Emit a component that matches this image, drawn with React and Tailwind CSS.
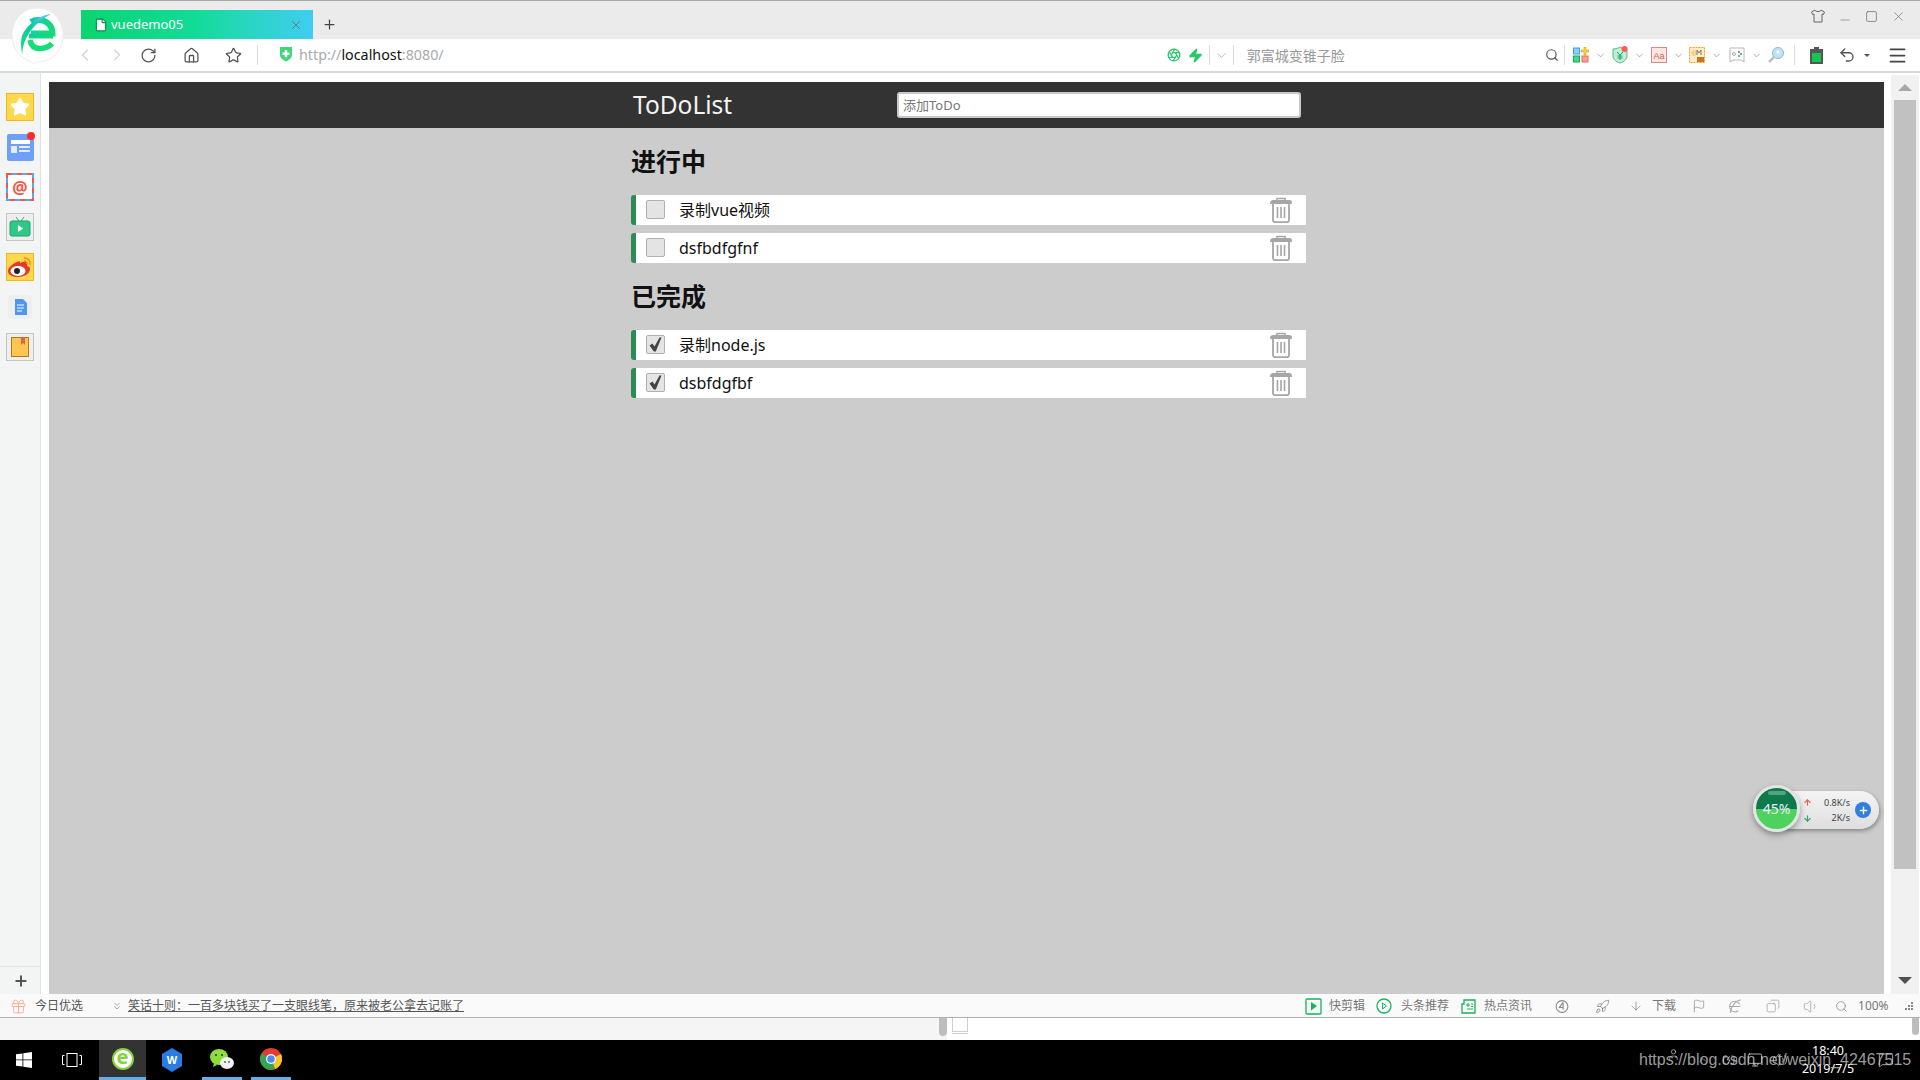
import {
  ArrowDown, Aperture, ChevronDown, ChevronLeft, ChevronRight, ChevronUp, ChevronsDown, Copy, File, Flag, Gift, House,
  Menu, Minus, Plus, RotateCw, Rocket, Search, Square, Star, Undo2, User, Volume1, Volume2, X, Zap, Monitor, MessageSquare, BatteryCharging,
} from "lucide-react";

const todos = ["录制vue视频", "dsfbdfgfnf"];
const dones = ["录制node.js", "dsbfdgfbf"];

function Logo() {
  return (
    <svg className="absolute left-[8px] top-[4px]" width="60" height="66" viewBox="8 4 60 66">
      <defs>
        <linearGradient id="eg" x1="0" y1="0" x2="1" y2="1">
          <stop offset="0" stopColor="#12c9a8" />
          <stop offset="1" stopColor="#13e06e" />
        </linearGradient>
        <linearGradient id="sw" x1="1" y1="0" x2="0" y2="1">
          <stop offset="0" stopColor="#55c8f0" />
          <stop offset="0.5" stopColor="#10c9a0" />
          <stop offset="1" stopColor="#18df78" />
        </linearGradient>
      </defs>
      <path d="M37.5 8c14.5 0 25.5 11.500 25.500 27 0 15-11 27-25.500 27l-4 2-3-2.800C19.500 58.500 12 48 12 35 12 20 23 8 37.500 8z" fill="#fff" stroke="#ececec" />
      <path d="M31 33.500h21.500c0-8-6-13.500-14-13.500-3 0-5.500.7-7.500 2" fill="none" stroke="url(#eg)" strokeWidth="6" />
      <path d="M29 33.500h24v5H29z" fill="url(#eg)" />
      <path d="M30 40c1 6 5 8.500 10 8.500 5 0 9-1.500 12-5" fill="none" stroke="#14de74" strokeWidth="5.500" />
      <path d="M51 14c-13 2-27 13-29.500 24-1 5-.5 11 1 17-.3-8 2-14 6-21 5-8 13-15 22.500-20z" fill="url(#sw)" />
      <path d="M51 14c-6 .6-13 4-18 8l4-1.500c5-2.500 9-5 14-6.500z" fill="#55c8f0" />
    </svg>
  );
}

function TabStrip() {
  return (
    <div className="h-[39px] shrink-0 bg-[#ebebeb] border-t border-[#a8a8a8] flex items-end pl-[81px]">
      <div className="h-[29px] w-[232px] bg-gradient-to-r from-[#0bd56e] via-[#12db98] to-[#3fcdf0] flex items-center pl-[13px]">
        <File size={14} className="text-[#0a8a50] fill-white" />
        <span className="ml-[3px] text-[13px] text-white">vuedemo05</span>
        <X size={14} strokeWidth={1.3} className="ml-auto mr-[10px] text-[#5f6d6b]" />
      </div>
      <Plus size={15} strokeWidth={2} className="ml-[9px] mb-[7px] text-[#444]" />
      <div className="ml-auto self-start flex items-center h-[30px] pr-[14px] text-[#666]">
        <svg width="16" height="14" viewBox="0 0 16 14" fill="none" stroke="#666">
          <path d="M5 1 1.500 3l1 2.500L4 5v8h8V5l1.500.5 1-2.500L11 1c-.5 2-5.500 2-6 0z" />
        </svg>
        <Minus size={14} strokeWidth={1} className="ml-[12px] mt-[8px]" />
        <Square size={13} strokeWidth={1.300} className="ml-[13px]" />
        <X size={15} strokeWidth={1} className="ml-[13px]" />
      </div>
    </div>
  );
}

function Caret() {
  return <ChevronDown size={11} strokeWidth={1.300} className="text-[#777] ml-[6px]" />;
}

function Toolbar() {
  return (
    <div className="h-[34px] shrink-0 bg-white border-b-2 border-[#d8d8d8] flex items-center pl-[75px] text-[14px]">
      <ChevronLeft size={20} strokeWidth={1.500} className="text-[#d4d4d4]" />
      <ChevronRight size={20} strokeWidth={1.500} className="ml-[12px] text-[#d4d4d4]" />
      <RotateCw size={17} strokeWidth={1.800} className="ml-[13px] text-[#555]" />
      <House size={17} strokeWidth={1.800} className="ml-[26px] text-[#555]" />
      <Star size={17} strokeWidth={1.800} className="ml-[25px] text-[#555]" />
      <div className="ml-[15px] w-px h-[20px] bg-[#ddd]" />
      <svg className="ml-[21px] mb-[3px]" width="14" height="16" viewBox="0 0 14 16">
        <path d="M1 1h12v8c0 3-3 5-6 6.500C4 14 1 12 1 9z" fill="#3fd77a" />
        <path d="M5.800 4h2.400v2.500h2.300v2.400H8.200v2.400H5.800V8.900H3.500V6.500h2.300z" fill="#fff" />
      </svg>
      <span className="ml-[6px] text-[14.300px] text-[#aaa]">http://<span className="text-[#111]">localhost</span>:8080/</span>

      <div className="ml-[723px] flex items-center">
        <Aperture size={14} strokeWidth={2.200} className="text-[#2bc76a]" />
        <Zap size={15} className="ml-[7px] text-[#25c96b] fill-[#25c96b]" />
        <div className="ml-[6px] w-px h-[20px] bg-[#ddd]" />
        <ChevronDown size={15} strokeWidth={1} className="ml-[4px] text-[#999]" />
        <div className="ml-[4px] w-px h-[20px] bg-[#ddd]" />
        <span className="ml-[13px] w-[309px] text-[14px] text-[#999]">郭富城变锥子脸</span>
        <Search size={14} strokeWidth={2} className="ml-[-11px] text-[#555]" />
        <div className="ml-[5px] w-px h-[20px] bg-[#ddd]" />
        <svg className="ml-[8px]" width="16" height="16" viewBox="0 0 16 16">
          <rect x="0.500" y="1" width="6" height="6" fill="#8fd0fb" stroke="#3aa0e8" />
          <rect x="0.500" y="9" width="6" height="6" fill="#3fdc85" stroke="#16a85a" />
          <rect x="9" y="9" width="6" height="6" fill="#ffa090" stroke="#e06a5a" />
          <path d="M11 0h2v3h3v2h-3v3h-2V5H8V3h3z" fill="#ffd23c" stroke="#c69600" strokeWidth="0.500" />
        </svg>
        <Caret />
        <svg className="ml-[6px]" width="16" height="18" viewBox="0 0 16 18">
          <path d="M1 3c3 0 5-1 7-2 2 1 4 2 7 2v7c0 3-3 6-7 7-4-1-7-4-7-7z" fill="#bdeed6" stroke="#55b98a" />
          <path d="M5 6l3 3 3-3M8 9v5M5.500 10h5M5.500 12h5" stroke="#2f9a68" fill="none" />
          <circle cx="12.500" cy="3" r="3" fill="#ff5a5a" />
        </svg>
        <Caret />
        <svg className="ml-[6px]" width="16" height="16" viewBox="0 0 16 16">
          <rect x="0.500" y="0.500" width="15" height="15" fill="#fbe6e2" stroke="#d88a80" />
          <text x="8" y="11.500" textAnchor="middle" fontSize="9" fill="#c8605a" fontFamily="Liberation Sans">Aa</text>
        </svg>
        <Caret />
        <svg className="ml-[5px]" width="16" height="16" viewBox="0 0 16 16">
          <rect x="0.500" y="0.500" width="15" height="15" fill="#fdeccc" stroke="#f0a020" strokeDasharray="2 1" />
          <circle cx="5" cy="6" r="3" fill="#f8d28c" />
          <rect x="8" y="10" width="7" height="5" fill="#c8781a" />
          <path d="M8 8V3l2 3 2-3v5" stroke="#8a7a60" fill="none" />
        </svg>
        <Caret />
        <svg className="ml-[7px]" width="16" height="16" viewBox="0 0 16 16" fill="none">
          <path d="M1 1h14v14l-3-2H4l-3 2z" stroke="#b8b8b8" />
          <circle cx="5" cy="7" r="1.500" stroke="#aaa" />
          <rect x="9" y="4" width="2" height="2" fill="#e86a5a" />
          <rect x="11" y="6" width="2" height="2" fill="#45b6e8" />
          <rect x="9" y="8" width="2" height="2" fill="#3fd07a" />
        </svg>
        <Caret />
        <svg className="ml-[6px]" width="16" height="16" viewBox="0 0 16 16">
          <circle cx="10" cy="6" r="5.500" fill="#bfe2f5" stroke="#8ab6d0" />
          <circle cx="10" cy="5" r="1.500" fill="#fff" />
          <path d="M6 10l-5 5" stroke="#c0c0c0" strokeWidth="2.500" />
        </svg>
        <div className="ml-[10px] w-px h-[20px] bg-[#ddd]" />
        <svg className="ml-[15px]" width="13" height="17" viewBox="0 0 13 17">
          <path d="M4 0h5v2h4v15H0V2h4z" fill="#555" />
          <rect x="2" y="6" width="9" height="9" fill="#12c850" />
        </svg>
        <Undo2 size={18} strokeWidth={1.800} className="ml-[15px] text-[#555]" />
        <div className="ml-[8px] mt-[1px] border-x-[3px] border-t-[3px] border-x-transparent border-t-[#555]" />
        <Menu size={21} strokeWidth={2} className="ml-[17px] text-[#444]" />
      </div>
    </div>
  );
}

function SideIcon({ children, border = "border-[#c4c4c4]", bg = "bg-[#eee]" }) {
  return <div className={`w-[28px] h-[28px] border ${border} ${bg} flex items-center justify-center`}>{children}</div>;
}

function Sidebar() {
  return (
    <div className="w-[41px] shrink-0 bg-[#f3f4f4] border-r border-[#e2e2e2] flex flex-col items-center pt-[20px] gap-[12px]">
      <SideIcon border="border-[#f3b61f]" bg="bg-[#ffd84d]">
        <Star size={20} className="text-white fill-white" />
      </SideIcon>
      <div className="relative w-[27px] h-[27px] mt-[1px] rounded-[2px] bg-[#6ea0fb] flex flex-col gap-[2px] px-[4px] pt-[6px]">
        <div className="h-[4px] bg-white" />
        <div className="flex gap-[2px]">
          <div className="w-[6px] h-[7px] bg-white/80" />
          <div className="flex-1 flex flex-col gap-[2px]">
            <div className="h-[2px] bg-white/80" />
            <div className="h-[2px] bg-white/80" />
          </div>
        </div>
        <div className="absolute -right-[1px] -top-[2px] w-[8px] h-[8px] rounded-full bg-[#ff2a2a]" />
      </div>
      <div className="relative w-[28px] h-[28px] bg-white flex items-center justify-center text-[#ee5a4a] text-[17px] leading-none font-bold">
        <svg className="absolute inset-0" width="28" height="28" viewBox="0 0 28 28" fill="none" strokeWidth="2">
          <rect x="1" y="1" width="26" height="26" stroke="#58a8f0" />
          <rect x="1" y="1" width="26" height="26" stroke="#ef5a4a" strokeDasharray="5 5" />
        </svg>
        <span className="relative">@</span>
      </div>
      <SideIcon>
        <svg width="22" height="20" viewBox="0 0 22 20">
          <path d="M7 0l3 4M15 0l-3 4" stroke="#2bb673" />
          <rect x="1" y="4" width="20" height="15" rx="2" fill="#2fc987" stroke="#20a068" />
          <path d="M9 8l5 3.500-5 3.500z" fill="#fff" />
        </svg>
      </SideIcon>
      <SideIcon border="border-[#f3b61f]" bg="bg-[#ffd84d]">
        <svg width="26" height="22" viewBox="0 0 26 22">
          <path d="M10 6C5 8 1 12 1 15c0 4 5 6 10 6 7 0 12-4 12-8 0-2-2-3-3-3 1-3-1-5-4-4-2 .5-3 1-3 1s1-3-3-1z" fill="#e8352e" />
          <ellipse cx="11" cy="15" rx="7.500" ry="5" fill="#fff" />
          <circle cx="10" cy="15" r="3" fill="#222" />
          <path d="M17 2c4 0 7 3 6 7M17 5c2 0 3 1.500 3 3" stroke="#f08a1e" strokeWidth="1.500" fill="none" />
        </svg>
      </SideIcon>
      <div className="w-[24px] h-[24px] mt-[2px] rounded-[4px] bg-[#eeeeee] flex items-center justify-center">
        <svg width="13" height="16" viewBox="0 0 13 16">
          <path d="M1 0h8l4 4v12H1z" fill="#4f96ee" />
          <path d="M3 6h7M3 9h7M3 12h5" stroke="#fff" />
        </svg>
      </div>
      <div className="mt-[2px]">
        <SideIcon>
          <svg width="18" height="20" viewBox="0 0 18 20">
            <rect x="0.500" y="0.500" width="17" height="19" fill="#fdc650" stroke="#b87a18" />
            <path d="M10 1h4v7l-2-2-2 2z" fill="#e8604a" />
          </svg>
        </SideIcon>
      </div>
      <div className="mt-auto w-full h-[28px] border-t border-[#e2e2e2] flex items-center justify-center pl-[2px]">
        <Plus size={16} strokeWidth={3} className="text-[#555]" />
      </div>
    </div>
  );
}

function Trash() {
  return (
    <svg width="22" height="26" viewBox="0 0 22 26" fill="none" stroke="#a6a6a6" strokeWidth="1.500">
      <path d="M7 4V1.500h8V4" />
      <path d="M1 5.500c0-1 1-1.500 2-1.500h16c1 0 2 .5 2 1.500V6H1z" strokeWidth="1.800" />
      <path d="M3 6v17c0 1.500 1 2.200 2 2.200h12c1 0 2-.7 2-2.200V6" strokeWidth="1.800" />
      <path d="M7.500 10v11M11 10v11M14.500 10v11" strokeWidth="1.600" />
    </svg>
  );
}

function Row({ label, done }) {
  return (
    <li className="h-[30px] w-[675px] flex items-center bg-white border-l-[5px] border-[#2e8b57] rounded-l-[3px] text-[16px] leading-none text-[#111]">
      <div className="ml-[10px] mb-[1px] w-[19px] h-[19px] rounded-[2px] border border-[#b0b0b0] bg-[#e4e4e4] flex items-center justify-center">
        {done && (
          <svg width="13" height="15" viewBox="0 0 13 15">
            <path d="M0.500 8.500 3.500 6.500 5.500 9.500 10.500 0.500H12.500L6.800 14.500H4.800z" fill="#444" />
          </svg>
        )}
      </div>
      <span className="ml-[14px]">{label}</span>
      <div className="ml-auto mr-[14px] mb-[1px] flex">
        <Trash />
      </div>
    </li>
  );
}

function Page() {
  return (
    <div className="flex-1 pt-[9px] pl-[8px] flex flex-col bg-white min-w-0">
      <div className="flex-1 bg-[#cccccc] flex flex-col">
        <div className="h-[46px] bg-[#333333] flex items-center pl-[584px]">
          <h1 className="w-[264px] text-[24.500px] leading-none text-[#f4f4f4]">ToDoList</h1>
          <input
            readOnly
            placeholder="添加ToDo"
            className="w-[404px] h-[26px] rounded-[3px] bg-white border-2 border-[#c8c8c8] px-[4px] text-[13px] placeholder:text-[#777] outline-none"
          />
        </div>
        <div className="pl-[582px]">
          <h2 className="mt-[19px] text-[25px] leading-[29px] font-bold text-[#111]">进行中</h2>
          <ul className="mt-[19px] flex flex-col gap-[8px]">
            {todos.map((t) => <Row key={t} label={t} />)}
          </ul>
          <h2 className="mt-[19px] text-[25px] leading-[29px] font-bold text-[#111]">已完成</h2>
          <ul className="mt-[19px] flex flex-col gap-[8px]">
            {dones.map((t) => <Row key={t} label={t} done />)}
          </ul>
        </div>
      </div>
    </div>
  );
}

function Scrollbar() {
  return (
    <div className="w-[36px] shrink-0 bg-white pl-[7px] pr-[1px] pt-[2px] flex">
      <div className="flex-1 bg-[#f1f1f1] flex flex-col items-center">
        <div className="h-[25px] flex items-center">
          <div className="border-x-[7px] border-b-[7px] border-x-transparent border-b-[#a8a8a8]" />
        </div>
        <div className="w-[22px] h-[769px] bg-[#c1c1c1]" />
        <div className="flex-1 flex items-end pb-[10px]">
          <div className="border-x-[7px] border-t-[7px] border-x-transparent border-t-[#505050]" />
        </div>
      </div>
    </div>
  );
}

function StatusBar() {
  return (
    <div className="h-[24px] shrink-0 bg-[#fafafa] border-b border-[#b0b0b0] flex items-center pt-[1px] text-[12px] text-[#555] pl-[10px]">
      <Gift size={17} strokeWidth={1.200} className="text-[#f6a88c]" />
      <span className="ml-[8px]">今日优选</span>
      <ChevronsDown size={12} strokeWidth={1} className="ml-[28px]" />
      <span className="ml-[5px] underline w-[336px] whitespace-nowrap">笑话十则：一百多块钱买了一支眼线笔，原来被老公拿去记账了</span>

      <svg className="ml-[841px]" width="17" height="17" viewBox="0 0 17 17" fill="none">
        <rect x="1" y="1" width="15" height="15" rx="1" stroke="#15b45a" strokeWidth="1.300" />
        <path d="M6 4l6 4-6 4.500z" fill="#15b45a" />
      </svg>
      <span className="ml-[7px] w-[36px] whitespace-nowrap text-[#777]">快剪辑</span>
      <svg className="ml-[11px]" width="16" height="16" viewBox="0 0 16 16" fill="none">
        <circle cx="8" cy="8" r="7" stroke="#15b45a" strokeWidth="1.300" />
        <path d="M6.500 5l4 3-4 3z" stroke="#15b45a" />
      </svg>
      <span className="ml-[9px] w-[48px] whitespace-nowrap text-[#777]">头条推荐</span>
      <svg className="ml-[12px]" width="15" height="15" viewBox="0 0 15 15" fill="none" stroke="#15b45a" strokeWidth="1.300">
        <path d="M3 1h11v13H1V5h2z" />
        <path d="M6 5h2v2H6zM10 5h2M10 7.500h2M6 10h6" strokeWidth="1" />
      </svg>
      <span className="ml-[8px] w-[48px] whitespace-nowrap text-[#777]">热点资讯</span>
      <svg className="ml-[23px]" width="14" height="15" viewBox="0 0 13 14" fill="none" stroke="#888">
        <circle cx="6.500" cy="7" r="5.500" />
        <path d="M7.500 3 4 8h4M7.500 3v7" />
      </svg>
      <Rocket size={15} strokeWidth={1} className="ml-[26px] text-[#666]" />
      <ArrowDown size={14} strokeWidth={1} className="ml-[19px] text-[#666]" />
      <span className="ml-[9px] w-[24px] whitespace-nowrap text-[#777]">下载</span>
      <Flag size={14} strokeWidth={1} className="ml-[16px] text-[#777]" />
      <svg className="ml-[22px]" width="14" height="15" viewBox="0 0 13 14" fill="none" stroke="#aaa">
        <path d="M11 5A5 5 0 1 0 9.500 11M2 7h9.500M12 1C8 1 3 6 2 13" />
      </svg>
      <Copy size={14} strokeWidth={1} className="ml-[24px] text-[#888] -scale-x-100" />
      <Volume1 size={17} strokeWidth={1} className="ml-[23px] text-[#999]" />
      <Search size={13} strokeWidth={1.200} className="ml-[15px] text-[#777]" />
      <span className="ml-[10px] w-[32px] text-[#777]">100%</span>
      <div className="ml-[15px] grid grid-cols-3 gap-[1px] w-[8px] h-[8px]">
        <i /><i /><i className="bg-[#888]" />
        <i /><i className="bg-[#888]" /><i className="bg-[#888]" />
        <i className="bg-[#888]" /><i className="bg-[#888]" /><i className="bg-[#888]" />
      </div>
    </div>
  );
}

function LowerStrip() {
  return (
    <div className="h-[22px] shrink-0 flex bg-white">
      <div className="w-[947px] bg-[#f5f5f5] flex justify-end">
        <div className="w-[8px] h-[18px] rounded-b-[4px] bg-[#bdbdbd]" />
      </div>
      <div className="ml-[5px] w-[16px] h-[14px] border-x border-b border-[#cfcfcf] relative">
        <div className="absolute left-[-1px] right-[-1px] bottom-[-3px] h-px bg-[#cfcfcf]" />
      </div>
      <div className="ml-auto mr-[1px] w-[7px] h-[17px] rounded-b-[4px] bg-[#bdbdbd]" />
    </div>
  );
}

function Taskbar() {
  return (
    <div className="relative h-[40px] shrink-0 bg-black flex items-center text-white">
      <svg className="ml-[16px]" width="16" height="16" viewBox="0 0 16 16" fill="#fff">
        <path d="M0 2.300 6.500 1.400v6.100H0zM7.300 1.300 16 0v7.500H7.300zM0 8.300h6.500v6.300L0 13.700zM7.300 8.300H16V16l-8.700-1.300z" />
      </svg>
      <svg className="ml-[30px]" width="20" height="14" viewBox="0 0 20 14" fill="none" stroke="#fff">
        <rect x="5" y="0.500" width="10" height="13" />
        <path d="M2.500 2.500H.5v9h2M17.500 2.500h2v9h-2" />
      </svg>
      <div className="ml-[17px] w-[47px] h-full bg-[#333] border-b-[3px] border-[#66aee8] flex items-center justify-center">
        <div className="w-[22px] h-[22px] rounded-full bg-white border-2 border-[#84d23c] flex items-center justify-center text-[#84d23c] text-[20px] font-bold leading-none pb-[3px]">e</div>
      </div>
      <svg className="ml-[15px]" width="22" height="24" viewBox="0 0 22 24">
        <path d="M11 0l10 6v12l-10 6-10-6V6z" fill="#2b7be4" />
        <text x="11" y="16" textAnchor="middle" fontSize="11" fontWeight="700" fill="#fff" fontFamily="Liberation Sans">W</text>
      </svg>
      <div className="ml-[19px] w-[40px] h-full border-b-[3px] border-[#66aee8] flex items-center justify-center">
        <svg width="24" height="22" viewBox="0 0 24 22">
          <ellipse cx="9" cy="9" rx="9" ry="8" fill="#8fdc3c" />
          <path d="M4 15l-1 4 4-2z" fill="#8fdc3c" />
          <ellipse cx="17" cy="15" rx="7" ry="6" fill="#f2f2f2" />
          <circle cx="6" cy="7" r="1" fill="#333" />
          <circle cx="12" cy="7" r="1" fill="#333" />
          <circle cx="15" cy="14" r="0.900" fill="#555" />
          <circle cx="19" cy="14" r="0.900" fill="#555" />
        </svg>
      </div>
      <div className="ml-[9px] w-[40px] h-full border-b-[3px] border-[#66aee8] flex items-center justify-center">
        <svg width="22" height="22" viewBox="0 0 22 22">
          <circle cx="11" cy="11" r="11" fill="#e33b2e" />
          <path d="M11 11 21 6a11 11 0 0 1-6 15z" fill="#f7c52c" />
          <path d="M11 11 15 21A11 11 0 0 1 1.500 5.500z" fill="#2fa84f" />
          <circle cx="11" cy="11" r="5" fill="#fff" />
          <circle cx="11" cy="11" r="3.800" fill="#4a8af4" />
        </svg>
      </div>

      <div className="ml-auto flex items-center pr-[26px]">
        <User size={13} strokeWidth={1} className="mb-[12px]" />
        <ChevronUp size={12} strokeWidth={1} className="ml-[17px]" />
        <BatteryCharging size={16} strokeWidth={1} className="ml-[13px]" />
        <Monitor size={16} strokeWidth={1} className="ml-[9px]" />
        <Volume2 size={16} strokeWidth={1} className="ml-[9px]" />
        <div className="ml-[12px] w-[56px] flex flex-col items-center text-[12.500px] leading-[18px]">
          <span>18:40</span>
          <span>2019/7/5</span>
        </div>
        <MessageSquare size={16} strokeWidth={1} className="ml-[22px]" />
      </div>
      <span className="absolute left-[1639px] top-[9px] text-[16px] leading-[22px] text-[#c4c4c4]/80 font-['Liberation_Sans',sans-serif] whitespace-nowrap">
        https://blog.csdn.net/weixin_42467515
      </span>
    </div>
  );
}

function SpeedWidget() {
  return (
    <div className="absolute left-[1753px] top-[785px] w-[126px] h-[47px]">
      <div className="absolute left-[20px] top-[6px] right-0 h-[38px] rounded-full bg-gradient-to-b from-[#f4f4f4] to-[#dedede] shadow-[1px_2px_4px_rgba(0,0,0,0.35)]">
        <ArrowDown size={9} strokeWidth={3} className="absolute left-[30px] top-[7px] rotate-180 text-[#f0604a]" />
        <ArrowDown size={9} strokeWidth={3} className="absolute left-[30px] top-[23px] text-[#2aa860]" />
        <span className="absolute right-[29px] top-[5px] text-[9px] leading-[14px] text-[#444]">0.8K/s</span>
        <span className="absolute right-[29px] top-[20px] text-[9px] leading-[14px] text-[#444]">2K/s</span>
        <div className="absolute right-[8px] top-[11px] w-[16px] h-[16px] rounded-full bg-[#2f7fe0] flex items-center justify-center">
          <Plus size={11} strokeWidth={3} className="text-white" />
        </div>
      </div>
      <div className="absolute left-0 top-0 w-[47px] h-[47px] rounded-full border-[3px] border-[#e4e4e4] overflow-hidden bg-gradient-to-b from-[#0c7a4a] from-50% to-[#4ed25e] to-50% shadow-[0_3px_6px_rgba(0,0,0,0.35)] flex items-center justify-center text-[14px] text-[#eef]">
        45%
        <div className="absolute left-[12px] top-[3px] w-[18px] h-[4px] rounded-full bg-white/30" />
      </div>
    </div>
  );
}

export default function App() {
  return (
    <div className="relative w-[1920px] h-[1080px] overflow-hidden flex flex-col bg-white font-['Noto_Sans','Noto_Sans_CJK_SC',sans-serif]">
      <TabStrip />
      <Toolbar />
      <div className="flex-1 flex min-h-0">
        <Sidebar />
        <Page />
        <Scrollbar />
      </div>
      <StatusBar />
      <LowerStrip />
      <Taskbar />
      <Logo />
      <SpeedWidget />
    </div>
  );
}
